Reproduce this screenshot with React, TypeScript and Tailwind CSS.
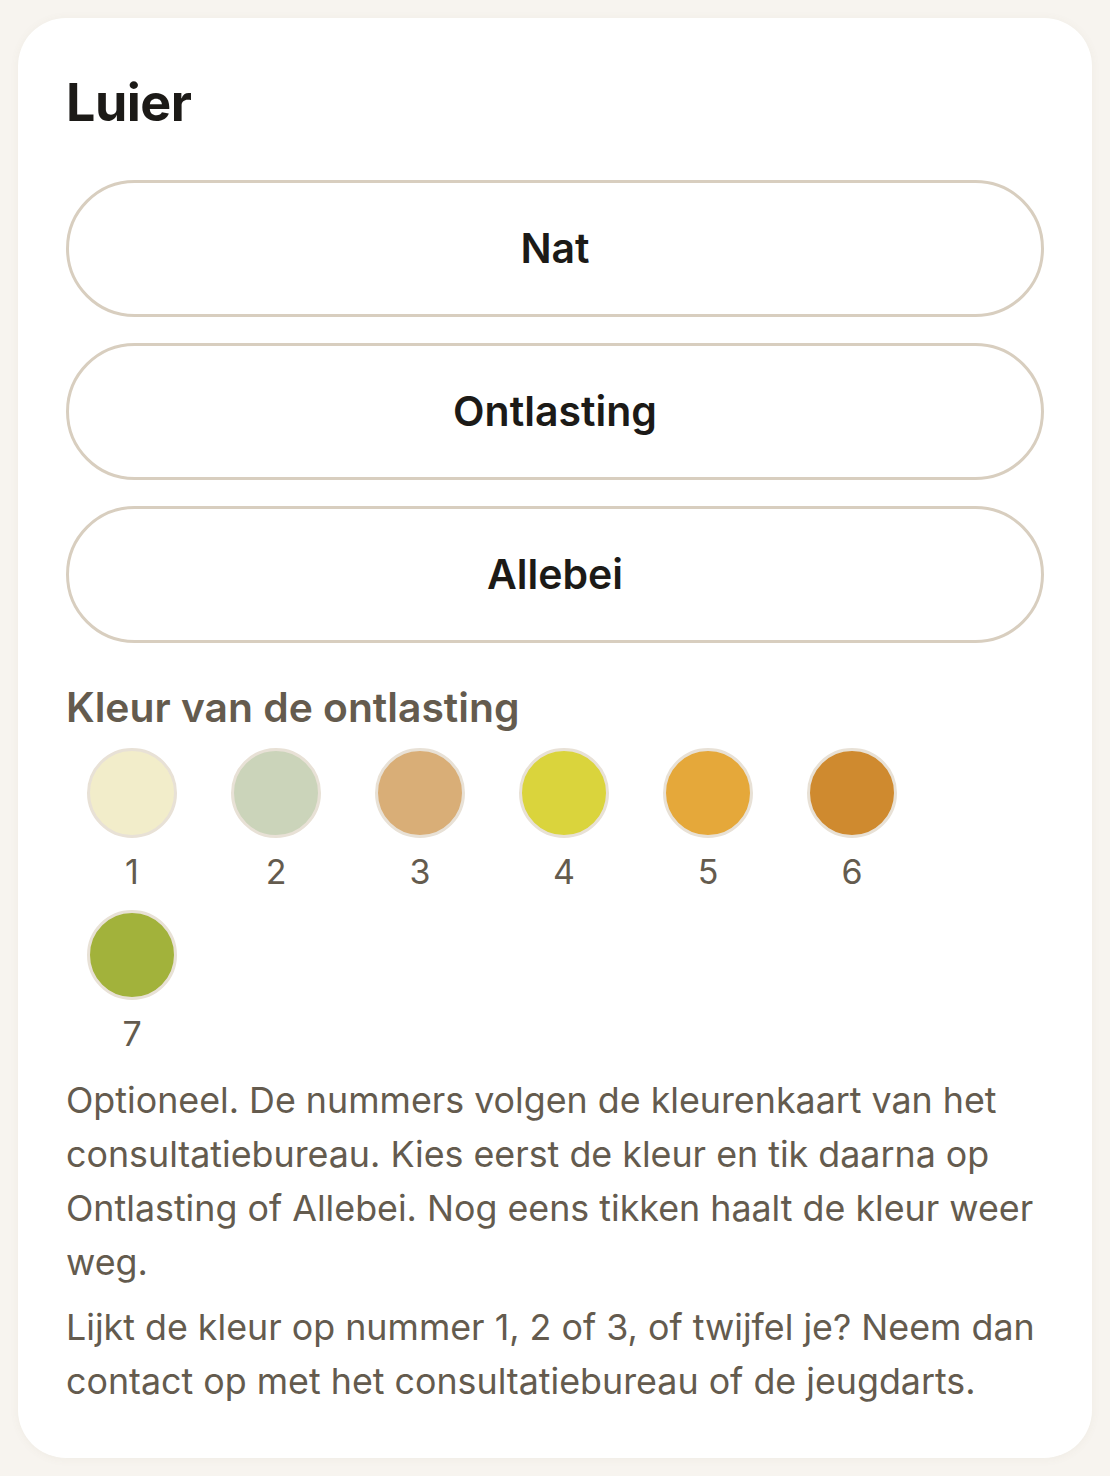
import React, { useState } from 'react';

const swatches = [
  { id: 1, color: '#f2edca' },
  { id: 2, color: '#cbd4ba' },
  { id: 3, color: '#d9ae77' },
  { id: 4, color: '#dad43c' },
  { id: 5, color: '#e5a83a' },
  { id: 6, color: '#cf8a2f' },
  { id: 7, color: '#a2b23b' },
];

const options = ['Nat', 'Ontlasting', 'Allebei'];

export default function App() {
  const [selected, setSelected] = useState<number | null>(null);

  return (
    <div className="min-h-screen bg-[#f7f4ef] p-[18px] font-['Inter','Noto_Sans',sans-serif]">
      <div className="rounded-[48px] bg-white px-12 pt-[54px] pb-[50px] shadow-[0_1px_10px_rgba(120,100,70,0.06)]">
        <h2 className="text-[52px] font-bold leading-[1.2] tracking-[-0.01em] text-[#1c1a17]">Luier</h2>

        <div className="mt-[46px] flex flex-col gap-[26px]">
          {options.map((label) => (
            <button
              key={label}
              type="button"
              className="h-[137px] w-full rounded-full border-[3px] border-[#d8cebf] bg-white text-[41px] font-semibold text-[#1c1a17]"
            >
              {label}
            </button>
          ))}
        </div>

        <h3 className="mt-[38px] text-[40.8px] font-semibold leading-[1.3] text-[#645b4e]">Kleur van de ontlasting</h3>

        <div className="mt-[14px] flex flex-wrap gap-x-3 gap-y-[16px]">
          {swatches.map((s) => (
            <button
              key={s.id}
              type="button"
              onClick={() => setSelected(selected === s.id ? null : s.id)}
              className="flex w-[132px] flex-col items-center gap-[12px]"
            >
              <span
                className="block h-[90px] w-[90px] rounded-full border-[3px] border-[#e8e1d6]"
                style={{ backgroundColor: s.color }}
              />
              <span className="text-[34px] leading-[44px] text-[#645b4e]">{s.id}</span>
            </button>
          ))}
        </div>

        <p className="mt-[17px] text-[35.8px] leading-[54px] text-[#645b4e]">
          Optioneel. De nummers volgen de kleurenkaart van het consultatiebureau. Kies eerst de kleur en tik daarna op
          Ontlasting of Allebei. Nog eens tikken haalt de kleur weer weg.
        </p>
        <p className="mt-[11px] text-[35.8px] leading-[54px] text-[#645b4e]">
          Lijkt de kleur op nummer 1, 2 of 3, of twijfel je? Neem dan contact op met het consultatiebureau of de
          jeugdarts.
        </p>
      </div>
    </div>
  );
}
